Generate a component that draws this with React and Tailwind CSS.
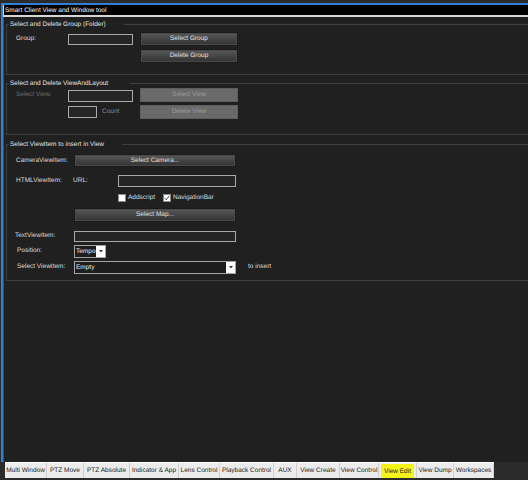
import React from 'react';

const tabs = [
  { label: 'Multi Window', cls: 'w-[42px]' },
  { label: 'PTZ Move', cls: 'w-[37px]' },
  { label: 'PTZ Absolute', cls: 'w-[46px]' },
  { label: 'Indicator & App', cls: 'w-[49px]' },
  { label: 'Lens Control', cls: 'w-[41px]' },
  { label: 'Playback Control', cls: 'w-[54px]' },
  { label: 'AUX', cls: 'w-[23px]' },
  { label: 'View Create', cls: 'w-[43px]' },
  { label: 'View Control', cls: 'w-[39px]' },
  { label: 'View Edit', cls: 'w-[38px]', active: true },
  { label: 'View Dump', cls: 'w-[37px]' },
  { label: 'Workspaces', cls: 'w-[40px]' },
];

function Button({ children, className = '', disabled }) {
  if (disabled) {
    return (
      <div className={`flex items-center justify-center border border-[#5e5e5e] bg-[#6a6a6a] text-[#9d9d9d] ${className}`}>
        {children}
      </div>
    );
  }
  return (
    <div className={`flex items-center justify-center border border-[#1a1a1a] bg-linear-to-b from-[#5a5a5a] to-[#313131] text-[#e2e2e2] shadow-[inset_0_0_0_1px_#4a4a4a] ${className}`}>
      {children}
    </div>
  );
}

function TextBox({ className = '' }) {
  return <div className={`border border-[#a9a9a9] bg-[#252525] ${className}`} />;
}

function Select({ value, className = '' }) {
  return (
    <div className={`flex border border-[#a4a4a4] bg-[#1d1d1d] ${className}`}>
      <div className="flex-1 overflow-hidden whitespace-nowrap pl-[1px] leading-[11px] text-[#ececec]">{value}</div>
      <div className="flex w-[9px] items-center justify-center bg-white">
        <svg width="4" height="3" viewBox="0 0 4 3">
          <path d="M0 0 L4 0 L2 2.5 Z" fill="#333" />
        </svg>
      </div>
    </div>
  );
}

function Checkbox({ checked }) {
  return (
    <div className="flex h-[8px] w-[8px] items-center justify-center border border-[#8a8a8a] bg-white">
      {checked && (
        <svg width="6" height="6" viewBox="0 0 6 6">
          <path d="M0.8 3.2 L2.3 4.8 L5.2 0.9" stroke="#444" strokeWidth="1" fill="none" />
        </svg>
      )}
    </div>
  );
}

function GroupBox({ title, className = '', gapClass = 'pr-[18px]', children }) {
  return (
    <fieldset className={`border border-r-0 border-[#3e3e3e] ${className}`}>
      <legend className={`ml-[2px] pl-[1px] ${gapClass} leading-[9px] text-[#e6e6e6]`}>{title}</legend>
      {children}
    </fieldset>
  );
}

export default function App() {
  return (
    <div className="flex h-[480px] w-[528px] flex-col overflow-hidden bg-[#2b2b2b] pt-[3px] font-['Liberation_Sans',Arial,sans-serif] text-[6.5px] [text-rendering:geometricPrecision]">
      <div className="ml-[1px] flex h-[459px] flex-col border-l-2 border-t-2 border-[#2f7fd6]">
        <div className="h-[12px] border-b-2 border-l border-[#d6d6d6] bg-black pl-[1px] leading-[11px] text-white">
          Smart Client View and Window tool
        </div>
        <div className="flex flex-1 flex-col border-l border-[#4c4c4c] bg-[#202020] pl-[2px] text-[#dedede]">
          {/* Group */}
          <GroupBox title="Select and Delete Group (Folder)" className="mt-[3px] h-[55px]">
            <div className="mt-[3px] grid grid-cols-[52px_72px_98px] items-center pl-[9px]">
              <div>Group:</div>
              <TextBox className="h-[11px] w-[65px]" />
              <Button className="h-[14px]">Select Group</Button>
            </div>
            <div className="mt-[3px] grid grid-cols-[52px_72px_98px] items-center pl-[9px]">
              <div />
              <div />
              <Button className="h-[14px]">Delete Group</Button>
            </div>
          </GroupBox>

          {/* View */}
          <GroupBox title="Select and Delete ViewAndLayout" className="mt-[4px] h-[56px]" gapClass="pr-[22px]">
            <div className="grid grid-cols-[52px_72px_98px] items-center pl-[9px]">
              <div className="text-[#6f6f6f]">Select View:</div>
              <TextBox className="mt-[2px] h-[12px] w-[65px]" />
              <Button disabled className="h-[14px]">Select View</Button>
            </div>
            <div className="mt-[3px] grid grid-cols-[52px_72px_98px] items-center pl-[9px]">
              <div />
              <div className="flex items-center">
                <TextBox className="h-[12px] w-[29px]" />
                <span className="ml-[5px] text-[#8c8c8c]">Count</span>
              </div>
              <Button disabled className="h-[14px]">Delete View</Button>
            </div>
          </GroupBox>

          {/* ViewItem */}
          <GroupBox title="Select ViewItem to insert in View" className="mt-[5px] h-[141px]" gapClass="pr-[18px]">
            <div className="pl-[9px]">
              <div className="mt-[5px] flex items-center">
                <div className="w-[58px]">CameraViewItem:</div>
                <Button className="h-[13px] w-[162px]">Select Camera...</Button>
              </div>
              <div className="mt-[8px] flex items-center">
                <div className="w-[57px]">HTMLViewItem:</div>
                <div className="w-[45px]">URL:</div>
                <TextBox className="h-[12px] w-[118px]" />
              </div>
              <div className="mt-[6px] flex items-center pl-[102px]">
                <Checkbox />
                <span className="ml-[2px] w-[35px]">Addscript</span>
                <Checkbox checked />
                <span className="ml-[2px]">NavigationBar</span>
              </div>
              <div className="mt-[5px] flex items-center">
                <div className="w-[58px]" />
                <Button className="h-[14px] w-[162px]">Select Map...</Button>
              </div>
              <div className="mt-[9px] flex items-center">
                <div className="-ml-[1px] w-[59px]">TextViewItem:</div>
                <TextBox className="h-[11px] w-[162px]" />
              </div>
              <div className="mt-[3px] flex items-center">
                <div className="ml-[1px] w-[57px]">Position:</div>
                <Select value="Tempo" className="h-[13px] w-[32px]" />
              </div>
              <div className="mt-[3px] flex items-center">
                <div className="ml-[1px] w-[57px]">Select ViewItem:</div>
                <Select value="Empty" className="h-[13px] w-[162px]" />
                <span className="ml-[12px]">to insert</span>
              </div>
            </div>
          </GroupBox>
        </div>
      </div>

      <div className="ml-[5px] flex h-[16px] w-[489px] border-t border-white bg-[#ececec] text-[#1a1a1a]">
        {tabs.map((t) => (
          <div
            key={t.label}
            className={`flex items-center justify-center whitespace-nowrap border-r border-[#cfcfcf] ${t.cls}`}
          >
            <span className={t.active ? 'bg-[#f4f41c] px-[3px] pt-[2px] leading-[12px]' : ''}>{t.label}</span>
          </div>
        ))}
      </div>
      <div className="flex-1 bg-[#2b2b2b]" />
    </div>
  );
}
